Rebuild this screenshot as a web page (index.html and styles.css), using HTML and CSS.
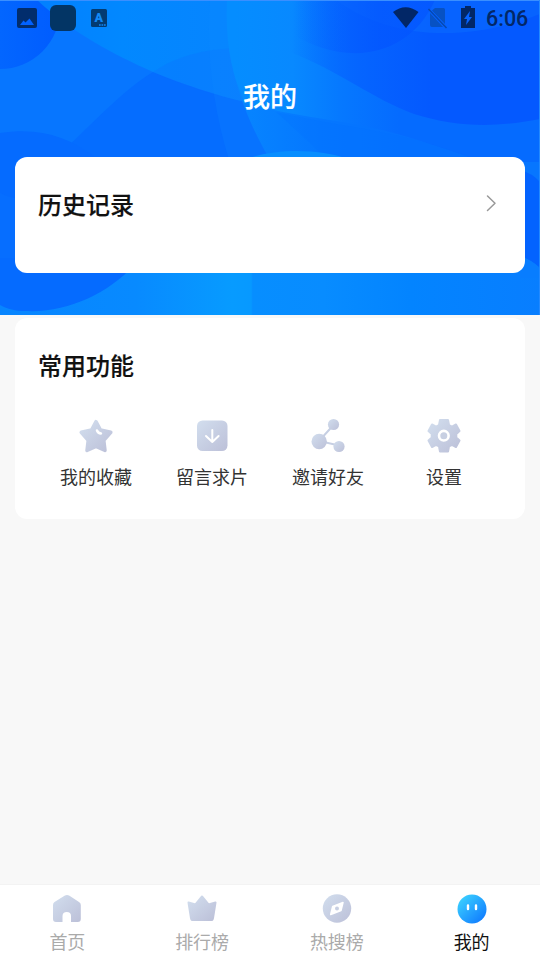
FILE: index.html
```html
<!DOCTYPE html>
<html lang="zh-CN">
<head>
<meta charset="utf-8">
<title>我的</title>
<link rel="stylesheet" href="styles.css">
</head>
<body>
<svg class="defs" width="0" height="0" aria-hidden="true">
  <defs>
    <linearGradient id="soft" x1="0" y1="0" x2="1" y2="1"><stop offset="0" stop-color="#d2deee"/><stop offset="1" stop-color="#bcc0d8"/></linearGradient>
    <linearGradient id="face" x1=".1" y1=".1" x2=".9" y2=".9"><stop offset="0" stop-color="#3bd0ff"/><stop offset="1" stop-color="#107cff"/></linearGradient>
  </defs>
</svg>
<main class="screen">
  <header class="hero">
    <svg class="hero-art" viewBox="0 0 540 315" aria-hidden="true">
      <defs>
        <linearGradient id="band" gradientUnits="userSpaceOnUse" x1="37" x2="250"><stop offset="0" stop-color="#0280ff"/><stop offset=".4" stop-color="#0288ff"/><stop offset="1" stop-color="#0784ff"/></linearGradient>
        <linearGradient id="lower" gradientUnits="userSpaceOnUse" x1="240" x2="400"><stop offset="0" stop-color="#0785ff"/><stop offset=".5" stop-color="#0577ff"/><stop offset="1" stop-color="#0571ff"/></linearGradient>
        <linearGradient id="upper" gradientUnits="userSpaceOnUse" x1="235" y1="50" x2="400" y2="50"><stop offset="0" stop-color="#058dff"/><stop offset=".35" stop-color="#0889ff"/><stop offset=".65" stop-color="#0678ff"/><stop offset="1" stop-color="#056bff"/></linearGradient>
        <linearGradient id="deep" gradientUnits="userSpaceOnUse" x1="290" x2="430"><stop offset="0" stop-color="#0562ff" stop-opacity="0"/><stop offset=".5" stop-color="#0562ff" stop-opacity=".85"/><stop offset="1" stop-color="#0459ff"/></linearGradient>
        <linearGradient id="disc" gradientUnits="userSpaceOnUse" x1="295" x2="380"><stop offset="0" stop-color="#0556ff" stop-opacity="0"/><stop offset="1" stop-color="#0354ff"/></linearGradient>
        <linearGradient id="floor" x2="1"><stop offset="0" stop-color="#0785ff"/><stop offset=".25" stop-color="#088aff"/><stop offset=".43" stop-color="#079bff"/><stop offset=".465" stop-color="#0799ff"/><stop offset=".468" stop-color="#078eff"/><stop offset=".6" stop-color="#088cff"/><stop offset=".76" stop-color="#0384ff"/><stop offset="1" stop-color="#087eff"/></linearGradient>
        <linearGradient id="corner" x2="1"><stop offset="0" stop-color="#0670ff"/><stop offset="1" stop-color="#005cff"/></linearGradient>
      </defs>
      <path fill="#0776ff" d="M0 0h540v315H0z"/>
      <circle fill="url(#corner)" cx="0" cy="9" r="60"/>
      <path fill="#056dff" d="M30 180C80 139 115 95 153 72c38-19 62-25 120-22v130z"/>
      <path fill="url(#band)" d="M37 0C74 34 113 54 153 72c32 13 62 23 92 30h30V0z"/>
      <path fill="#0e70ff" opacity=".28" d="M153 72c27-19 62-25 98-24v55C216 96 184 86 153 72z"/>
      <path fill="#0e8cff" opacity=".2" d="M210 0c-4 57 4 111 19 160h45V0z"/>
      <path fill="url(#lower)" d="M227 0c-3 63 16 113 43 160h270V0z"/>
      <path fill="url(#upper)" d="M227 0c-2 40 4 73 18 103 50 15 110 17 166 35 29 9 50 16 71 24h58V0z"/>
      <path fill="#0570ff" opacity=".25" d="M276 112c18 16 32 29 49 45h145c-75-28-131-30-194-45z"/>
      <path fill="url(#deep)" d="M286 0h254v119c-45 9-85 8-126-5C373 99 339 71 290 52z"/>
      <path fill="#0d72ff" opacity=".4" d="M336 0c56 42 137 41 204 14V0z"/>
      <path fill="url(#disc)" opacity=".65" d="M286 30c55 38 122 30 149-30H286z"/>
      <path fill="#056bff" d="M0 133c39-6 67 3 95 24v50H0z"/>
      <path fill="#088eff" d="M244 160c29-12 76-12 107 0z"/>
      <path fill="url(#floor)" d="M0 250h540v65H0z"/>
      <path fill="#056bff" d="M0 190h90l44 75c-26 29-68 48-108 46-11 0-18-2-26-6z"/>
      <path fill="#0871ff" opacity=".5" d="M0 193q8 4 15 5v60H0z"/>
      <path fill="#0363ff" d="M520 170q12 3 20 12v86q-9-8-20-12z"/>
      <path fill="#087dff" d="M520 256q12 4 20 12v10h-20z"/>
      <path fill="#3a8fff" d="M0 0h540v1H0z"/>
      <path fill="#238aff" d="M539 0h1v315h-1z"/>
    </svg>
    <div class="statusbar">
      <svg width="120" height="36" viewBox="0 0 120 36" aria-hidden="true">
        <path fill="#022d6d" fill-rule="evenodd" d="M19 8h16q2 0 2 2v16q0 2-2 2H19q-2 0-2-2V10q0-2 2-2zm1 17h14l-4.500-6.500-4 4-2-2z"/>
        <rect x="50" y="5" width="26" height="26" rx="6" fill="#033565"/>
        <rect x="91" y="9" width="16" height="18" rx="1.500" fill="#033b72"/>
        <text class="badge" x="98.800" y="22.200" text-anchor="middle">A</text>
        <path stroke="#1389f7" stroke-width="1.400" stroke-dasharray="1.700 .8" d="M99 25h7"/>
      </svg>
      <svg class="status-right" width="88" height="36" viewBox="0 0 88 36" aria-hidden="true">
        <path fill="#022767" d="M0 12Q12.500 2.500 25.500 12L13 28z"/>
        <path fill="#0752c4" d="M42 8h8.500q1.500 0 1.500 1.500V24L39 10.500zM37 13v12q0 2 2 2h11z"/>
        <path stroke="#0649b2" stroke-width="1.500" d="m35.500 9 18 19"/>
        <path fill="#022767" fill-rule="evenodd" d="M68 8h4V6h6v2h4v20H68zm9 3-6 8h3l-1 6 6-8h-3z"/>
      </svg>
      <span class="clock">6:06</span>
    </div>
    <h1 class="title">我的</h1>
    <section class="card history">
      <h2 class="heading">历史记录</h2>
      <svg width="12" height="18" viewBox="0 0 12 18" aria-hidden="true"><path fill="none" stroke="#999" stroke-width="1.500" stroke-linecap="round" stroke-linejoin="round" d="m2.500 2 7.500 7.300-7.500 7.200"/></svg>
    </section>
  </header>
  <section class="card tools">
    <h2 class="heading">常用功能</h2>
    <div class="grid">
      <div class="item">
        <svg width="36" height="36" viewBox="0 0 36 36"><path fill="url(#soft)" stroke="url(#soft)" stroke-width="3.500" stroke-linejoin="round" d="m18 3.700 4.500 8.300 10.300 2.300-7 8 1.200 10.200-9-4-9 4 1.200-10.200-7-8L13.500 12z"/><path fill="none" stroke="#fff" stroke-width="2.500" stroke-linecap="round" d="M19 12.500q1 2.700 4 3"/></svg>
        <span>我的收藏</span>
      </div>
      <div class="item">
        <svg width="36" height="36" viewBox="0 0 36 36"><rect x="3" y="2.500" width="30.500" height="30.500" rx="5.500" fill="url(#soft)"/><path fill="none" stroke="#fff" stroke-width="2" stroke-linecap="round" stroke-linejoin="round" d="M18.300 12v12M12 18l6.300 6 6.300-6"/></svg>
        <span>留言求片</span>
      </div>
      <div class="item">
        <svg width="36" height="36" viewBox="0 0 36 36"><path fill="none" stroke="#c6cfe3" stroke-width="2" d="M23.500 7 9 23l20 4.500"/><g fill="url(#soft)"><circle cx="23.500" cy="6.500" r="5.600"/><circle cx="9.200" cy="23.500" r="7.700"/><circle cx="29" cy="28.500" r="5.600"/></g></svg>
        <span>邀请好友</span>
      </div>
      <div class="item">
        <svg width="36" height="36" viewBox="0 0 36 36"><path fill="url(#soft)" stroke="url(#soft)" stroke-width="2" stroke-linejoin="round" d="M14 2h8l1 5 3 1.700 4-2.200 3.500 6.500-3.200 3v3.500l3.200 3-3.500 6.500-4-2.200-3 1.700-1 5h-8l-1-5-3-1.700-4 2.200L2.500 22.500l3.200-3V16l-3.200-3L6 6.500l4 2.200L13 7z"/><circle cx="17.800" cy="17.700" r="4.800" fill="#c7cfe2" stroke="#fff" stroke-width="2.600"/></svg>
        <span>设置</span>
      </div>
    </div>
  </section>
  <nav class="tabs">
    <div class="tab">
      <svg width="32" height="32" viewBox="0 0 32 32"><path fill="url(#soft)" d="M13.500 2.800q2.500-1.800 5 0L28 9q1.800 1 1.800 3v14q0 3-3 3H20v-6q0-4-4.200-4T11.500 23v6H5q-3 0-3-3V12q0-2 1.500-3z"/></svg>
      <span>首页</span>
    </div>
    <div class="tab">
      <svg width="32" height="32" viewBox="0 0 32 32"><path fill="url(#soft)" stroke="url(#soft)" stroke-width="2" stroke-linejoin="round" d="m16 3.500 6.500 8 7-2L27 25q-.3 2-2 2H7q-1.700 0-2-2L2.500 9.500l7 2z"/></svg>
      <span>排行榜</span>
    </div>
    <div class="tab">
      <svg width="32" height="32" viewBox="0 0 32 32"><circle cx="16" cy="15.500" r="14.200" fill="url(#soft)"/><path fill="#fff" stroke="#fff" stroke-linejoin="round" stroke-width="1.500" d="m22 9.500-2 8-10.300 4 2-8z"/><circle cx="16" cy="15.500" r="2" fill="#c7cfe2"/></svg>
      <span>热搜榜</span>
    </div>
    <div class="tab active">
      <svg width="32" height="32" viewBox="0 0 32 32"><circle cx="16" cy="16" r="14.500" fill="url(#face)"/><path fill="none" stroke="#fff" stroke-width="2.400" stroke-linecap="round" d="M12 12.500v3.500M20 12.500v3.500"/></svg>
      <span>我的</span>
    </div>
  </nav>
</main>
</body>
</html>
```

FILE: styles.css
```css
* { box-sizing: border-box; }
body {
  margin: 0;
  background: #f8f8f8;
  color: #111;
  font-family: Roboto, "Noto Sans CJK SC", sans-serif;
}
.defs { position: absolute; }
.screen {
  display: flex;
  flex-direction: column;
  width: 540px;
  height: 960px;
  overflow: hidden;
}
svg { display: block; flex: none; }
h1, h2 { margin: 0; }
.hero {
  position: relative;
  flex: none;
  height: 315px;
  padding: 0 15px;
}
.hero-art {
  position: absolute;
  inset: 0;
  width: 540px;
  height: 315px;
  z-index: -1;
}
.statusbar {
  display: flex;
  height: 36px;
  margin: 0 -15px;
}
.badge {
  fill: #1389f7;
  font-size: 12.5px;
  font-weight: 900;
}
.status-right { margin-left: auto; }
.clock {
  width: 59px;
  padding-left: 5px;
  color: #022767;
  font-size: 21.5px;
  font-weight: 500;
  line-height: 38px;
}
.title {
  height: 121px;
  padding-top: 2px;
  color: #fff;
  font-size: 27px;
  font-weight: 500;
  line-height: 121px;
  text-align: center;
  -webkit-text-stroke: 0.15px currentColor;
}
.card {
  background: #fff;
  border-radius: 12px;
}
.history {
  display: flex;
  justify-content: space-between;
  height: 116px;
  padding: 30px 28px 0 23px;
}
.history svg { margin-top: 7px; }
.heading {
  font-size: 24px;
  font-weight: 500;
  line-height: 38px;
  -webkit-text-stroke: 0.15px currentColor;
}
.tools {
  flex: none;
  height: 201px;
  margin: 3px 15px 0;
  padding: 30px 23px 0;
}
.grid {
  display: grid;
  grid-template-columns: repeat(4, 116px);
  margin-top: 32px;
}
.item {
  display: flex;
  flex-direction: column;
  align-items: center;
  gap: 10px;
  color: #333;
  font-size: 18px;
  line-height: 28px;
}
.tabs {
  display: grid;
  grid-template-columns: repeat(4, 1fr);
  flex: none;
  height: 76px;
  margin-top: auto;
  padding: 8px 1px 0 0;
  background: #fff;
  border-top: 1px solid #f3f3f3;
}
.tab {
  display: flex;
  flex-direction: column;
  align-items: center;
  gap: 4px;
  color: #aaa;
  font-size: 18px;
  line-height: 27px;
}
.active { color: #111; }
```
